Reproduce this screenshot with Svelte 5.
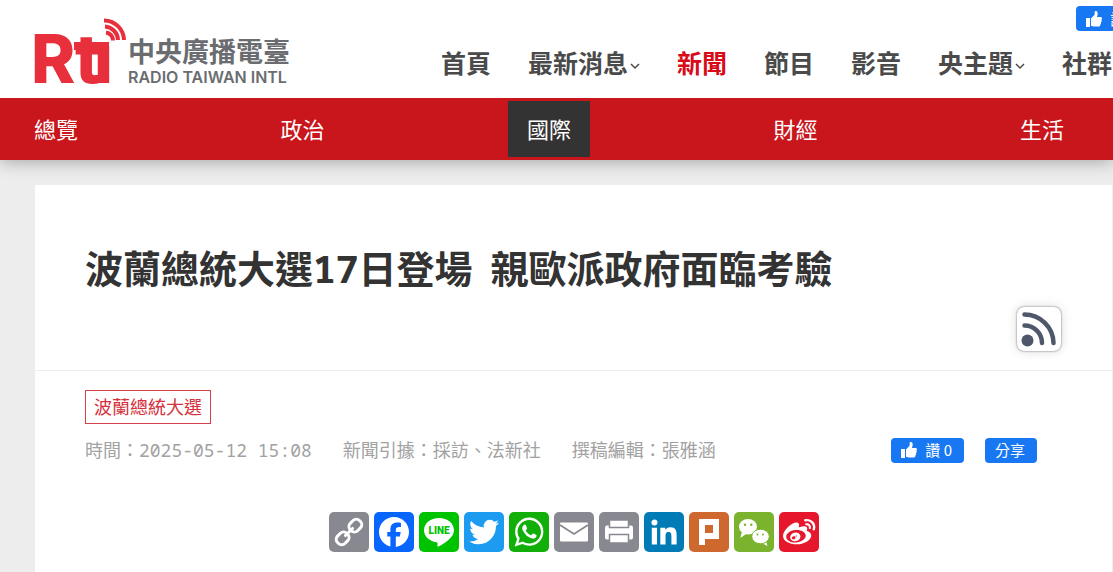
<script lang="ts">
  const nav = [
    { label: '首頁' },
    { label: '最新消息', more: true },
    { label: '新聞', active: true },
    { label: '節目' },
    { label: '影音' },
    { label: '央主題', more: true },
    { label: '社群' },
  ];

  const categories = ['總覽', '政治', '國際', '財經', '生活'];
  let current = $state('國際');

  const shares = [
    { id: 'link', label: 'Copy Link' },
    { id: 'facebook', label: 'Facebook' },
    { id: 'line', label: 'Line' },
    { id: 'twitter', label: 'Twitter' },
    { id: 'whatsapp', label: 'WhatsApp' },
    { id: 'email', label: 'Email' },
    { id: 'print', label: 'Print' },
    { id: 'linkedin', label: 'LinkedIn' },
    { id: 'plurk', label: 'Plurk' },
    { id: 'wechat', label: 'WeChat' },
    { id: 'weibo', label: 'Sina Weibo' },
  ];
</script>

{#snippet thumb()}
  <svg class="thumb" viewBox="0 0 16 16" aria-hidden="true">
    <path d="M0 7h4v9H0zM5 7.4 8.6 3.8V1.2C8.6.2 9.3 0 9.9 0c1.200 0 1.800 1.100 1.800 2.400 0 1.400-.5 2.600-.8 3.600H14.500c1 0 1.500.7 1.500 1.500 0 .6-.3 1-.7 1.300.3.300.5.7.400 1.200 0 .6-.4 1-.8 1.200.2.300.3.700.2 1.100-.1.500-.4.900-.8 1.100.1.300.1.600 0 .9-.2.800-.9 1.200-1.700 1.200H8.600C7.200 15.500 6.300 15 5 14.700z" />
  </svg>
{/snippet}

<header class="header">
  <a class="logo" href="#home" aria-label="中央廣播電臺">
    <svg width="262" height="68" viewBox="0 0 262 68">
      <g class="logo-mark">
        <text x="-3 41 60" y="65">Rtı</text>
        <rect x="40" y="24" width="35" height="8" />
      </g>
      <g class="logo-waves">
        <path d="M72 14.500a8 8 0 0 1 7 8" />
        <path d="M71 8.500a14 14 0 0 1 13 13.500" />
        <path d="M70 2.500a20 20 0 0 1 20 19.500" />
      </g>
      <text class="logo-zh" x="94" y="44">中央廣播電臺</text>
      <text class="logo-en" x="94" y="65">RADIO TAIWAN INTL</text>
    </svg>
  </a>
  <div class="header-right">
    <button class="fb top-like">{@render thumb()}讚 0</button>
    <nav class="nav">
      {#each nav as item}
        <a href="#{item.label}" class:active={item.active}>
          {item.label}
          {#if item.more}
            <svg class="chevron" viewBox="0 0 12 8" aria-hidden="true"><path d="M3 2l4 4 4-4" /></svg>
          {/if}
        </a>
      {/each}
    </nav>
  </div>
</header>

<nav class="subnav">
  {#each categories as name}
    <a href="#{name}" class:current={name === current} onclick={() => (current = name)}>{name}</a>
  {/each}
</nav>

<main class="article">
  <div class="article-head">
    <h1><span>波蘭總統大選17日登場</span><span>親歐派政府面臨考驗</span></h1>
    <a class="rss" href="#rss" aria-label="RSS">
      <svg viewBox="0 0 44 44">
        <circle cx="10.500" cy="33.500" r="6" />
        <path d="M7.500 18.500a17.500 17.500 0 0 1 17.500 17.500" />
        <path d="M7.500 7.500a29 29 0 0 1 29 28.500" />
      </svg>
    </a>
  </div>

  <div class="article-info">
    <a class="tag" href="#tag">波蘭總統大選</a>
    <div class="meta">
      <span>時間：2025-05-12 15:08</span>
      <span>新聞引據：採訪、法新社</span>
      <span>撰稿編輯：張雅涵</span>
      <div class="fb-group">
        <button class="fb">{@render thumb()}讚 0</button>
        <button class="fb">分享</button>
      </div>
    </div>
    <div class="shares">
      {#each shares as s}
        <a class="share {s.id}" href="#{s.id}" aria-label={s.label}>
          {#if s.id === 'link'}
            <svg viewBox="0 0 40 40">
              <g transform="rotate(-45 20 20)" fill="none" stroke="#fff" stroke-width="3">
                <rect x="4.500" y="14.800" width="13" height="10.400" rx="4.500" />
                <rect x="22.500" y="14.800" width="13" height="10.400" rx="4.500" />
                <path d="M15 20h10" stroke-linecap="round" />
              </g>
            </svg>
          {:else if s.id === 'facebook'}
            <svg viewBox="0 0 32 32"><path d="M28 16c0-6.627-5.373-12-12-12S4 9.373 4 16c0 5.628 3.875 10.350 9.101 11.647v-7.980h-2.474V16H13.100v-1.580c0-4.085 1.849-5.978 5.859-5.978.76 0 2.072.15 2.608.298v3.325c-.283-.03-.775-.045-1.386-.045-1.967 0-2.728.745-2.728 2.683V16h3.920l-.673 3.667h-3.247v8.245C23.395 27.195 28 22.135 28 16" /></svg>
          {:else if s.id === 'line'}
            <svg viewBox="0 0 40 40">
              <path d="M20 6C11.500 6 5 11.400 5 18.200c0 6 5.300 11 12.400 12 1.500.3 1.300 1 1 3.800 0 .7.400.8 1 .5C24.500 31.800 35 26 35 18.200 35 11.400 28.500 6 20 6z" />
              <text class="line-word" x="20" y="22" text-anchor="middle">LINE</text>
            </svg>
          {:else if s.id === 'twitter'}
            <svg viewBox="0 0 32 32"><path d="M28 8.557a10 10 0 0 1-2.828.775 4.930 4.930 0 0 0 2.166-2.725 9.700 9.700 0 0 1-3.130 1.194 4.920 4.920 0 0 0-3.593-1.550 4.924 4.924 0 0 0-4.794 6.049c-4.090-.21-7.720-2.170-10.150-5.150a4.940 4.940 0 0 0-.665 2.477c0 1.710.87 3.214 2.190 4.100a5 5 0 0 1-2.230-.616v.06c0 2.390 1.700 4.380 3.952 4.830-.414.115-.85.174-1.297.174q-.476-.001-.928-.086a4.935 4.935 0 0 0 4.600 3.420 9.900 9.900 0 0 1-6.114 2.107q-.597 0-1.175-.068a13.950 13.950 0 0 0 7.550 2.213c9.056 0 14.010-7.507 14.010-14.013q0-.32-.015-.637c.96-.695 1.795-1.560 2.455-2.550z" /></svg>
          {:else if s.id === 'whatsapp'}
            <svg viewBox="0 0 32 32"><path fill-rule="evenodd" d="M16.210 4.410C9.973 4.410 4.917 9.465 4.917 15.700c0 2.134.592 4.130 1.620 5.832L4.500 27.590l6.250-2.002a11.240 11.240 0 0 0 5.460 1.404c6.234 0 11.290-5.055 11.290-11.290 0-6.237-5.056-11.292-11.290-11.292m0 20.690c-1.910 0-3.690-.57-5.173-1.553l-3.610 1.156 1.173-3.490a9.350 9.350 0 0 1-1.790-5.512c0-5.180 4.217-9.400 9.400-9.400s9.397 4.220 9.397 9.400c0 5.188-4.214 9.400-9.398 9.400zm5.293-6.832c-.284-.155-1.673-.906-1.934-1.012-.265-.106-.455-.16-.658.12s-.78.91-.954 1.096c-.176.186-.345.203-.628.048-.282-.154-1.200-.494-2.264-1.517-.83-.795-1.373-1.760-1.530-2.055s0-.445.15-.584c.134-.124.3-.326.45-.488.15-.163.203-.28.306-.47.104-.19.06-.36-.005-.506-.066-.147-.59-1.587-.81-2.173-.218-.586-.46-.498-.63-.505-.168-.007-.358-.038-.55-.045-.19-.007-.51.054-.78.332-.277.274-1.050.943-1.100 2.362-.055 1.418.926 2.826 1.064 3.023.137.2 1.874 3.272 4.760 4.537 2.888 1.264 2.900.878 3.430.85.53-.027 1.734-.633 2-1.297s.287-1.240.22-1.363c-.07-.123-.26-.203-.54-.357z" /></svg>
          {:else if s.id === 'email'}
            <svg viewBox="0 0 40 40">
              <rect x="6" y="10.500" width="28" height="19" rx="1" />
              <path d="M6 13l14 9 14-9" fill="none" stroke="#888990" stroke-width="1.800" />
            </svg>
          {:else if s.id === 'print'}
            <svg viewBox="0 0 40 40">
              <path d="M8 13.500h24a2 2 0 0 1 2 2v10a2 2 0 0 1-2 2H8a2 2 0 0 1-2-2v-10a2 2 0 0 1 2-2z" />
              <path d="M10.500 8h19v7.500h-19zM10.500 22.500h19V31h-19z" stroke="#888990" stroke-width="1.500" />
            </svg>
          {:else if s.id === 'linkedin'}
            <svg viewBox="0 0 32 32"><path d="M6.227 12.610h4.190v13.480h-4.190zm2.095-6.700a2.430 2.430 0 0 1 0 4.860c-1.344 0-2.428-1.090-2.428-2.430s1.084-2.430 2.428-2.430m4.720 6.700h4.020v1.840h.058c.56-1.058 1.927-2.176 3.965-2.176 4.238 0 5.020 2.792 5.020 6.420v7.395h-4.183v-6.560c0-1.564-.03-3.574-2.178-3.574-2.180 0-2.514 1.700-2.514 3.460v6.668h-4.187z" /></svg>
          {:else if s.id === 'plurk'}
            <svg viewBox="0 0 40 40"><path fill-rule="evenodd" d="M10 7h20v20H16v6h-6zM16 13h8v8h-8z" /></svg>
          {:else if s.id === 'wechat'}
            <svg viewBox="0 0 40 40">
              <path d="M6.500 26l1-5h6z" />
              <ellipse cx="14" cy="14.800" rx="9" ry="7.800" />
              <circle cx="11" cy="12.700" r="1.200" fill="#7bb32e" />
              <circle cx="17.300" cy="12.700" r="1.200" fill="#7bb32e" />
              <path d="M33.500 34l-6-3 4.500-2z" />
              <ellipse cx="26.500" cy="24.500" rx="8.800" ry="7.300" stroke="#7bb32e" />
              <circle cx="23.500" cy="22.500" r="1" fill="#7bb32e" />
              <circle cx="29" cy="22.500" r="1" fill="#7bb32e" />
            </svg>
          {:else}
            <svg viewBox="0 0 40 40"><path transform="translate(4 4) scale(1.350 1.300)" d="M10.098 20.323c-3.977.391-7.414-1.406-7.672-4.020-.259-2.609 2.759-5.047 6.740-5.441 3.979-.394 7.413 1.404 7.671 4.018.259 2.600-2.759 5.049-6.737 5.439l-.002.004zM9.050 17.219c-.384.616-1.208.884-1.829.602-.612-.279-.793-.991-.406-1.593.379-.595 1.176-.861 1.793-.601.622.263.82.972.442 1.592zm1.270-1.627c-.141.237-.449.353-.689.253-.236-.09-.313-.361-.177-.586.138-.227.436-.346.672-.24.239.09.315.36.18.601l.014-.028zm.176-2.719c-1.893-.493-4.033.45-4.857 2.118-.836 1.704-.026 3.591 1.886 4.210 1.983.64 4.318-.341 5.132-2.179.8-1.793-.201-3.642-2.161-4.149zm7.563-1.224c-.346-.105-.57-.18-.405-.615.375-.977.42-1.804 0-2.404-.781-1.112-2.915-1.053-5.364-.03 0 0-.766.331-.571-.271.376-1.217.315-2.224-.27-2.809-1.338-1.337-4.869.045-7.888 3.080C1.309 10.870 0 13.273 0 15.348c0 3.981 5.099 6.395 10.086 6.395 6.536 0 10.888-3.801 10.888-6.820 0-1.822-1.547-2.854-2.915-3.284v.01zm1.908-5.092c-.766-.856-1.908-1.187-2.960-.962-.436.09-.706.511-.616.932.09.42.511.691.932.602.511-.105 1.067.044 1.442.465.376.421.466.977.316 1.473-.136.406.089.856.51.992.405.119.857-.105.992-.512.33-1.021.12-2.178-.646-3.035l.03.045zm2.418-2.195c-1.576-1.757-3.905-2.419-6.054-1.968-.496.104-.812.587-.706 1.081.104.496.586.813 1.082.707 1.532-.331 3.185.15 4.296 1.383 1.112 1.246 1.429 2.943.947 4.416-.165.48.106 1.007.586 1.157.479.165.991-.104 1.157-.586.675-2.088.241-4.478-1.338-6.235l.03.045z" /></svg>
          {/if}
        </a>
      {/each}
    </div>
  </div>
</main>

<style>
  :global(body) {
    background: #ededed;
    font-family: 'Noto Sans Mono', 'Noto Sans CJK TC', monospace;
    overflow-x: hidden;
    scrollbar-width: none;
  }

  a {
    color: inherit;
    text-decoration: none;
  }

  .header {
    position: relative;
    z-index: 1;
    display: flex;
    height: 98px;
    padding-left: 34px;
    background: #fff;
    overflow: hidden;
  }

  .logo {
    flex: none;
    padding-top: 18px;
  }

  .logo svg {
    display: block;
  }

  .logo-mark {
    fill: #e8303c;
    font-family: Inter, sans-serif;
    font-size: 67px;
    font-weight: 800;
  }

  .logo-waves {
    fill: none;
    stroke: #e8303c;
    stroke-width: 4;
  }

  .logo-zh,
  .logo-en {
    fill: #6a6c70;
    font-family: 'Noto Sans CJK TC', sans-serif;
    font-size: 27px;
    font-weight: 700;
  }

  .logo-en {
    font-family: Inter, sans-serif;
    font-size: 16px;
    font-weight: 600;
  }

  .header-right {
    display: flex;
    flex: 1;
    flex-direction: column;
    min-width: 0;
    padding: 6px 0 0 145px;
  }

  .fb {
    display: flex;
    align-items: center;
    height: 25px;
    padding: 0 12px 0 10px;
    border: 0;
    border-radius: 4px;
    background: #1877f2;
    color: #fff;
    font: 15px/24px 'Noto Sans CJK TC', sans-serif;
    white-space: nowrap;
    cursor: pointer;
  }

  .top-like {
    align-self: flex-end;
    margin-right: -36px;
  }

  .thumb {
    width: 16px;
    height: 16px;
    margin-right: 8px;
    fill: #fff;
  }

  .nav {
    display: flex;
    gap: 37px;
    padding-top: 13px;
    color: #4a4a4a;
    font-family: 'Noto Sans CJK TC', sans-serif;
    font-size: 25px;
    font-weight: 700;
    line-height: 36px;
    white-space: nowrap;
  }

  .nav a {
    display: flex;
    align-items: center;
  }

  .nav .active {
    color: #d70c18;
  }

  .chevron {
    width: 12px;
    height: 8px;
    margin-top: 8px;
    fill: none;
    stroke: #4a4a4a;
    stroke-width: 1.5;
  }

  .subnav {
    display: flex;
    justify-content: space-between;
    padding: 3px 30px 3px 15px;
    background: #c9161c;
    box-shadow: 0 2px 16px rgba(0, 0, 0, 0.3);
    color: #fff;
    font-family: 'Noto Sans CJK TC', sans-serif;
    font-size: 22px;
    line-height: 54px;
  }

  .subnav a {
    padding: 0 19px 2px;
  }

  .subnav .current {
    background: #333;
  }

  .article {
    margin: 25px 1px 0 35px;
    background: #fff;
  }

  .article-head {
    display: flex;
    flex-direction: column;
    padding: 59px 51px 19px 50px;
    border-bottom: 1px solid #ededed;
  }

  h1 {
    display: flex;
    flex-wrap: wrap;
    column-gap: 18px;
    margin: 0;
    color: #333;
    font-size: 38px;
    font-weight: 700;
    line-height: 48px;
  }

  .rss {
    align-self: flex-end;
    width: 44px;
    height: 44px;
    margin-top: 15px;
    border-radius: 7px;
    box-shadow: 0 0 2px rgba(0, 0, 0, 0.6), 0 0 12px rgba(0, 0, 0, 0.15);
  }

  .rss svg {
    display: block;
    fill: none;
    stroke: #4f586a;
    stroke-width: 4.500;
    stroke-linecap: round;
  }

  .rss circle {
    fill: #4f586a;
    stroke: none;
  }

  .article-info {
    padding: 19px 50px 20px;
  }

  .tag {
    display: inline-block;
    padding: 0 8px;
    border: 1px solid #d5404b;
    color: #d5303c;
    font-size: 18px;
    line-height: 32px;
  }

  .meta {
    display: flex;
    flex-wrap: wrap;
    align-items: center;
    column-gap: 31px;
    margin-top: 8px;
    padding-right: 25px;
    color: #a2a2a2;
    font-size: 18px;
    line-height: 36px;
  }

  .fb-group {
    display: flex;
    gap: 21px;
    margin-left: auto;
  }

  .shares {
    display: flex;
    flex-wrap: wrap;
    justify-content: center;
    gap: 5px;
    margin-top: 44px;
  }

  .share {
    width: 40px;
    height: 40px;
    border-radius: 5px;
    background: #888990;
  }

  .share svg {
    display: block;
    fill: #fff;
  }

  .facebook {
    background: #0866ff;
  }

  .line {
    background: #00c300;
  }

  .line-word {
    fill: #00c300;
    font-family: Roboto, sans-serif;
    font-size: 10px;
    font-weight: 900;
  }

  .twitter {
    background: #1d9bf0;
  }

  .whatsapp {
    background: #12af0a;
  }

  .linkedin {
    background: #007bb5;
  }

  .plurk {
    background: #cf682f;
  }

  .wechat {
    background: #7bb32e;
  }

  .weibo {
    background: #e6162d;
  }
</style>
